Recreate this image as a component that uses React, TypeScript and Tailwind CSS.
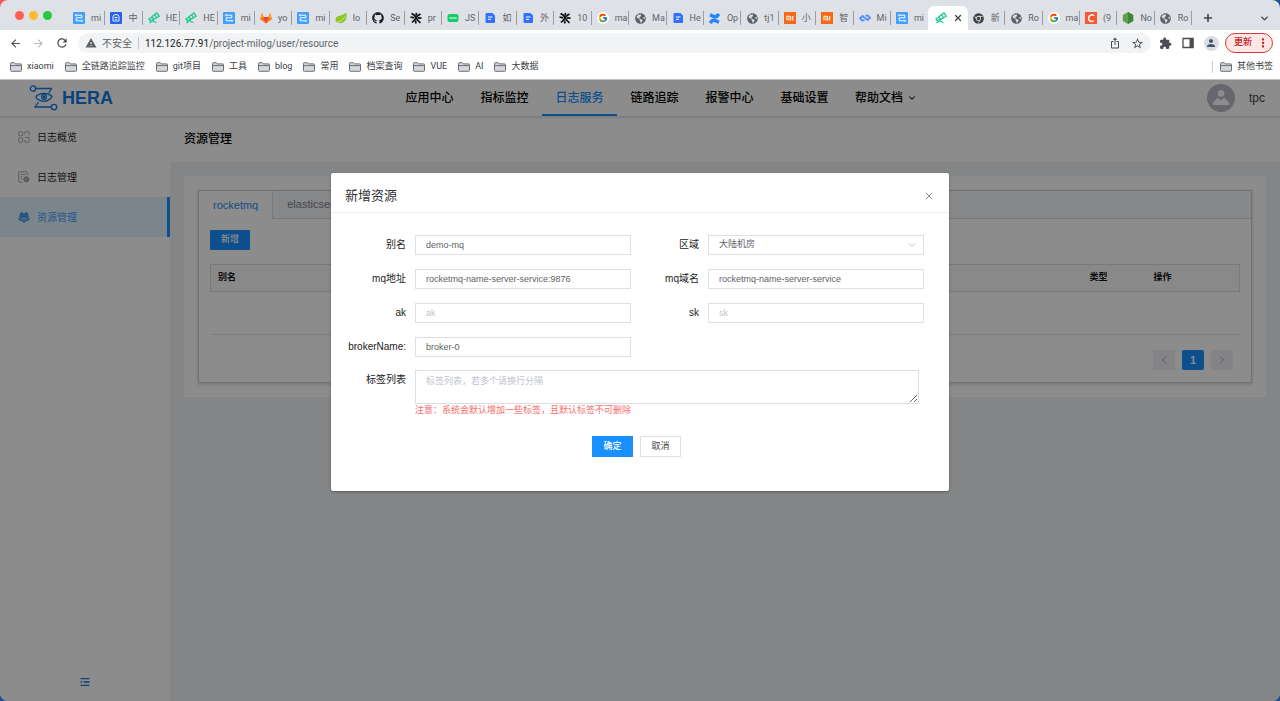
import { useState } from "react";
import type { ReactNode } from "react";
import { ChevronDown, ChevronLeft, ChevronRight, Plus, X } from "lucide-react";
import { FaChrome, FaGithub, FaGlobeAmericas } from "react-icons/fa";
import { FcGoogle } from "react-icons/fc";
import { SiConfluence } from "react-icons/si";
import {
  MdArrowBack,
  MdArrowForward,
  MdExtension,
  MdMoreVert,
  MdOutlineIosShare,
  MdPerson,
  MdRefresh,
  MdStarBorder,
  MdWarning,
} from "react-icons/md";

function MilogIcon() {
  return (
    <svg viewBox="0 0 12 12" className="size-3">
      <rect width="12" height="12" rx="1" fill="#409eff" />
      <path d="M4 3.200h4.800v2.600H3.200v3H8" fill="none" stroke="#fff" strokeWidth="1" />
      <circle cx="3" cy="3.200" r=".8" fill="#409eff" stroke="#fff" strokeWidth=".8" />
      <circle cx="9" cy="8.800" r=".8" fill="#409eff" stroke="#fff" strokeWidth=".8" />
    </svg>
  );
}

function CnIcon() {
  return (
    <svg viewBox="0 0 12 12" className="size-3">
      <rect width="12" height="12" rx="1" fill="#2563eb" />
      <path d="M3 9V4.800a3 2.300 0 0 1 6 0V9zM4.500 5.500h3M5 7.200h2" fill="none" stroke="#fff" strokeWidth=".9" />
    </svg>
  );
}

function TelescopeIcon() {
  return (
    <svg viewBox="0 0 12 12" className="size-3" fill="none" stroke="#1fc98b" strokeWidth="1.300">
      <path d="M4 4.500 9 1l2.200 3.300L5.800 7.300zM4.200 5 1 7l1.100 1.800L5.500 7M5 7.500v1.800l3.500 1.200M1.500 11l2.500-1.500M6.800 3l1.600 2.700" />
    </svg>
  );
}

function GitlabIcon() {
  return (
    <svg viewBox="0 0 12 12" className="size-3">
      <path d="M6 11.500 0 7l2-6 1.700 4h4.600L10 1l2 6z" fill="#fc6d26" />
      <path d="M6 11.500 3.700 5h4.600z" fill="#e24329" />
      <path d="M0 7l2-6 1.700 4zM12 7l-2-6-1.700 4z" fill="#fca326" />
    </svg>
  );
}

function LeafIcon() {
  return (
    <svg viewBox="0 0 12 12" className="size-3">
      <path d="M11.300.5C12.500 7 10 11 5 11.200 1.500 11.300 0 9 .5 6.800 1.200 3.200 7.500 4.200 11.300.5z" fill="#8cc820" />
      <path d="M1.500 10.300C5 10 8.500 8 10 4.500" fill="none" stroke="#dee1e6" strokeWidth=".8" />
    </svg>
  );
}

function KnotIcon() {
  return (
    <svg viewBox="0 0 12 12" className="size-3" fill="none" stroke="#111" strokeWidth="1.700">
      <path d="M1.500 1.500 4 3l4 5.500 2.500 2.500M10.500 2 8 3.500 4.500 8 2 10.500M.5 5l3.500.8M8 5.800l3.500.4M6.500.8 6 3.500M5.500 8.500l.5 3" />
    </svg>
  );
}

function JsonIcon() {
  return (
    <svg viewBox="0 0 12 12" className="size-3">
      <rect x=".5" y="2" width="11" height="8" rx="2" fill="#13ce66" />
      <path d="M2.500 6h7" stroke="#b8f3d2" strokeWidth="2" strokeDasharray="1.300 .6" />
    </svg>
  );
}

function DocIcon() {
  return (
    <svg viewBox="0 0 12 12" className="size-3">
      <path d="M2.500 1h6L11 3.500V10a1 1 0 0 1-1 1H2.500a1 1 0 0 1-1-1V2a1 1 0 0 1 1-1z" fill="#3370ff" />
      <path d="M4 5h4.500M4 7.300h3" stroke="#fff" strokeWidth="1" />
    </svg>
  );
}

function LoopIcon() {
  return (
    <svg viewBox="0 0 12 12" className="size-3" fill="none" stroke="#4d8dff" strokeWidth="1.700">
      <path d="M5.500 8.200 3.300 8.500 1 6.200 3.500 4 6 6.200M6.500 3.800 8.700 3.500 11 5.800 8.500 8 6 5.800" />
    </svg>
  );
}

function GoogleIcon() {
  return (
    <span className="flex size-3 items-center justify-center rounded-full bg-white">
      <FcGoogle size={10} />
    </span>
  );
}

function MiIcon() {
  return (
    <svg viewBox="0 0 12 12" className="size-3">
      <rect width="12" height="12" fill="#f56a14" />
      <path d="M3 8.500V4.300h2.500a1.200 1.200 0 0 1 1.200 1.200v3M4.900 5.800v2.700M8.700 4v4.500" fill="none" stroke="#fff" strokeWidth="1.100" />
    </svg>
  );
}

function CsdnIcon() {
  return (
    <svg viewBox="0 0 12 12" className="size-3">
      <rect width="12" height="12" fill="#fc5531" />
      <path d="M9 4C8.300 2.500 4.600 2.200 3.800 5 3 9 5.500 10.200 8.600 8.800" fill="none" stroke="#fff" strokeWidth="1.500" />
    </svg>
  );
}

function NodeIcon() {
  return (
    <svg viewBox="0 0 12 12" className="size-3">
      <path d="M6 0l5.200 3v6L6 12 .8 9V3z" fill="#5fa04e" />
      <path d="M6 0l5.200 3v6L6 12z" fill="#3e863d" />
    </svg>
  );
}

const globe = <FaGlobeAmericas size={11} color="#5f6368" />;

const browserTabs: { icon: ReactNode; label: string }[] = [
  { icon: <MilogIcon />, label: "mi" },
  { icon: <CnIcon />, label: "中" },
  { icon: <TelescopeIcon />, label: "HE" },
  { icon: <TelescopeIcon />, label: "HE" },
  { icon: <MilogIcon />, label: "mi" },
  { icon: <GitlabIcon />, label: "yo" },
  { icon: <MilogIcon />, label: "mi" },
  { icon: <LeafIcon />, label: "lo" },
  { icon: <FaGithub size={12} color="#1b1f23" />, label: "Se" },
  { icon: <KnotIcon />, label: "pr" },
  { icon: <JsonIcon />, label: "JS" },
  { icon: <DocIcon />, label: "如" },
  { icon: <DocIcon />, label: "外" },
  { icon: <KnotIcon />, label: "10" },
  { icon: <GoogleIcon />, label: "ma" },
  { icon: globe, label: "Ma" },
  { icon: <DocIcon />, label: "He" },
  { icon: <SiConfluence size={11} color="#2684ff" />, label: "Op" },
  { icon: globe, label: "tj1" },
  { icon: <MiIcon />, label: "小" },
  { icon: <MiIcon />, label: "智" },
  { icon: <LoopIcon />, label: "Mi" },
  { icon: <MilogIcon />, label: "mi" },
  { icon: <TelescopeIcon />, label: "" },
  { icon: <FaChrome size={11} color="#3c4043" />, label: "新" },
  { icon: globe, label: "Ro" },
  { icon: <GoogleIcon />, label: "ma" },
  { icon: <CsdnIcon />, label: "(9" },
  { icon: <NodeIcon />, label: "No" },
  { icon: globe, label: "Ro" },
];
const activeTab = 23;

const bookmarks = ["xiaomi", "全链路追踪监控", "git项目", "工具", "blog", "常用", "档案查询", "VUE", "AI", "大数据"];

function Bookmark({ name }: { name: string }) {
  return (
    <a href="#" className="flex items-center gap-[5px] whitespace-nowrap">
      <svg viewBox="0 0 12 10" className="h-2.5 w-3" fill="#d5d7da" stroke="#5f6368" strokeWidth=".9">
        <path d="M.5 1.500a.8.8 0 0 1 .8-.8h3l1 1.200h5.400a.8.8 0 0 1 .8.8v5.800a.8.8 0 0 1-.8.8H1.300a.8.8 0 0 1-.8-.8z" />
        <path d="M.5 3.600h11" fill="none" />
      </svg>
      {name}
    </a>
  );
}

function BrowserChrome() {
  return (
    <div className="font-[Roboto,'Noto_Sans_CJK_SC',sans-serif] text-[#3c4043]">
      <div className="flex h-[30px] bg-[#dee1e6]">
        <div className="flex w-[68px] shrink-0 items-center gap-[5px] pl-[15px]">
          <span className="size-[9px] rounded-full bg-[#fe5f57]" />
          <span className="size-[9px] rounded-full bg-[#febb2e]" />
          <span className="size-[9px] rounded-full bg-[#28c840]" />
        </div>
        <div className="flex min-w-0 flex-1 pt-1.5">
          {browserTabs.map((tab, i) =>
            i === activeTab ? (
              <div key={i} className="flex min-w-0 flex-1 items-center gap-1.5 rounded-t-md bg-white pl-[7px]">
                {tab.icon}
                <button aria-label="关闭标签页">
                  <X size={10} strokeWidth={3} />
                </button>
              </div>
            ) : (
              <div key={i} className="flex min-w-0 flex-1 items-center pl-[5px]">
                <span className="flex w-3 shrink-0 justify-center">{tab.icon}</span>
                <span className="ml-1.5 w-[13px] shrink-0 text-[9px] leading-4 whitespace-nowrap text-[#5f6368]">
                  {tab.label}
                </span>
                <span
                  className={`ml-auto h-3.5 w-px shrink-0 ${i === activeTab - 1 ? "bg-transparent" : "bg-[#9a9da1]"}`}
                />
              </div>
            )
          )}
        </div>
        <div className="flex w-[88px] shrink-0 items-center justify-between pt-1.5 pr-2.5 pl-2.5">
          <button aria-label="新标签页">
            <Plus size={12} strokeWidth={3} />
          </button>
          <button aria-label="搜索标签页">
            <ChevronDown size={11} strokeWidth={3} />
          </button>
        </div>
      </div>

      <div className="flex h-[26px] items-center bg-white pr-[7px] pl-[9px] text-[#4a4d51]">
        <div className="flex w-[69px] shrink-0 items-center gap-2.5">
          <button aria-label="后退"><MdArrowBack size={13} /></button>
          <button aria-label="前进"><MdArrowForward size={13} color="#b5b8bb" /></button>
          <button aria-label="刷新"><MdRefresh size={14} /></button>
        </div>
        <div className="flex h-5 flex-1 items-center rounded-full bg-[#f1f3f4] px-[7px] text-[10px]">
          <MdWarning size={12} color="#5f6368" />
          <span className="ml-[5px] text-[#5f6368]">不安全</span>
          <span className="mx-1.5 h-3 w-px bg-[#c4c7ca]" />
          <span className="text-[#5f6368]">
            <span className="text-[#202124]">112.126.77.91</span>/project-milog/user/resource
          </span>
          <span className="ml-auto flex items-center gap-2.5">
            <MdOutlineIosShare size={12} />
            <MdStarBorder size={13} />
          </span>
        </div>
        <div className="flex items-center gap-2.5 pl-2">
          <MdExtension size={13} />
          <svg viewBox="0 0 12 12" className="size-3">
            <path d="M1 1.500h10v9H1z" fill="none" stroke="#4a4d51" strokeWidth="1.300" />
            <path d="M7.500 1h4v10h-4z" fill="#4a4d51" />
          </svg>
          <span className="flex size-[15px] items-center justify-center rounded-full bg-[#dadde2]">
            <MdPerson size={12} color="#44546f" />
          </span>
          <button className="-ml-1 flex h-5 items-center gap-1 rounded-full border border-[#d93a36] bg-[#fce8e6] pr-0.5 pl-2 text-[9px] font-medium text-[#c5221f]">
            更新
            <MdMoreVert size={14} />
          </button>
        </div>
      </div>

      <div className="flex h-6 items-center gap-[11px] border-b border-[#c9c9c9] bg-white pr-[7px] pb-0.5 pl-2.5 text-[9px]">
        {bookmarks.map((name) => (
          <Bookmark key={name} name={name} />
        ))}
        <span className="ml-auto flex items-center gap-[7px]">
          <span className="h-3 w-px bg-[#c9ccd0]" />
          <Bookmark name="其他书签" />
        </span>
      </div>
    </div>
  );
}

const navItems = ["应用中心", "指标监控", "日志服务", "链路追踪", "报警中心", "基础设置"];

function Header() {
  return (
    <header className="relative z-10 flex h-9 shrink-0 items-stretch bg-white shadow-[0_1px_3px_rgba(0,21,41,0.2)]">
      <div className="flex w-[392px] shrink-0 items-center gap-1 pl-[29px] text-lg font-bold text-[#1379de]">
        <svg viewBox="0 0 29 26" className="h-[26px] w-[29px]" fill="none" stroke="currentColor" strokeWidth="1.300">
          <circle cx="4" cy="3.500" r="2.700" />
          <circle cx="25" cy="22" r="2.700" />
          <path d="M6.700 3.500H22.500L20 8M22.300 22H6l3.500-5M7 11.500C10 7.800 19 7.200 23 11.500c-1.800 3.800-6 5.200-9 4.700-4-.5-7-2.700-7-4.700z" />
          <circle cx="15" cy="12" r="2.300" />
          <circle cx="15" cy="12" r=".6" fill="currentColor" />
        </svg>
        HERA
      </div>
      <nav className="flex text-xs font-medium text-black">
        {navItems.map((item) => (
          <a
            key={item}
            href="#"
            className={`flex w-[75px] items-center justify-center border-y-2 border-t-transparent ${
              item === "日志服务" ? "border-b-[#1890ff] text-[#1890ff]" : "border-b-transparent"
            }`}
          >
            {item}
          </a>
        ))}
        <a href="#" className="flex items-center gap-1 px-[13px]">
          帮助文档
          <ChevronDown size={10} strokeWidth={2.500} />
        </a>
      </nav>
      <div className="ml-auto flex items-center gap-3.5 pr-[15px] text-xs text-[#444]">
        <svg viewBox="0 0 28 28" className="size-7">
          <circle cx="14" cy="14" r="14" fill="#babcc6" />
          <circle cx="14" cy="9.500" r="3.300" fill="#fff" />
          <path d="M6 21v-2.500l5-5 3 3 3-3 5 5V21z" fill="#fff" />
        </svg>
        tpc
      </div>
    </header>
  );
}

function OverviewIcon() {
  return (
    <svg viewBox="0 0 12 12" className="size-3" fill="none" stroke="#a0a0a0" strokeWidth=".9">
      <rect x=".7" y=".7" width="4" height="4" rx="1" />
      <rect x=".7" y="6.700" width="4" height="4.600" rx="1" />
      <path d="M6.700 3V1.700a1 1 0 0 1 1-1h2.600a1 1 0 0 1 1 1V4M7 6.500h3.300a1 1 0 0 1 1 1v2.800a1 1 0 0 1-1 1H7.700a1 1 0 0 1-1-1V9" />
    </svg>
  );
}

function LogIcon() {
  return (
    <svg viewBox="0 0 12 12" className="size-3" fill="none" stroke="#a0a0a0" strokeWidth=".9">
      <path d="M4.500 11.300h-3a.8.8 0 0 1-.8-.8v-9a.8.8 0 0 1 .8-.8h7a.8.8 0 0 1 .8.8V4M2.500 3.300h5M2.500 5.800h2M2.500 8h1.500" />
      <circle cx="8.300" cy="8.300" r="2.600" fill="#b5b5b5" />
      <circle cx="8.300" cy="8.300" r=".8" fill="#fff" />
    </svg>
  );
}

function ResourceIcon() {
  return (
    <svg viewBox="0 0 12 12" className="size-3" fill="#409eff" stroke="#2b84e6" strokeWidth=".7">
      <path d="M1.500 6.500 2.300 3l1-1.500h1.200L5.600 3v3.500zM6.400 6.500V3l1.100-1.500h1.200l1 1.500.8 3.500z" />
      <path d="M.5 7c0 2 3 2 5.500 4 2.500-2 5.500-2 5.500-4M2.500 7.500 6 9l3.500-1.500" fill="none" strokeWidth="1.100" />
    </svg>
  );
}

const menu = [
  { icon: <OverviewIcon />, label: "日志概览" },
  { icon: <LogIcon />, label: "日志管理" },
  { icon: <ResourceIcon />, label: "资源管理", active: true },
];

function Sidebar() {
  return (
    <aside className="flex w-[170px] shrink-0 flex-col bg-white pt-px">
      {menu.map((item) => (
        <a
          key={item.label}
          href="#"
          className={`flex h-10 items-center gap-[7px] border-r-3 pl-[18px] text-[10px] ${
            item.active ? "border-[#1890ff] bg-[#e0f4ff] text-[#409eff]" : "border-transparent text-[#222]"
          }`}
        >
          {item.icon}
          {item.label}
        </a>
      ))}
      <button aria-label="收起菜单" className="mx-auto mt-auto mb-3.5">
        <svg viewBox="0 0 10 10" className="size-2.5" stroke="#1379de" strokeWidth="1.300">
          <path d="M.5 1.700h9M3.500 5h6M.5 8.300h9M.5 5h1.700" />
        </svg>
      </button>
    </aside>
  );
}

function ResourcePage() {
  return (
    <main className="min-w-0 flex-1 bg-[#f0f2f5]">
      <h1 className="flex h-[46px] items-center bg-white px-3.5 text-xs font-medium text-black">资源管理</h1>
      <div className="m-3.5 bg-white p-3.5">
        <div className="border border-[#cdd0d6] shadow-[0_1px_3px_rgba(0,0,0,0.2)]">
          <div className="flex h-7 border-b border-[#d8dbe2] bg-[#f5f7fa] text-[11px]">
            <button className="-mb-px border-r border-[#d8dbe2] bg-white px-3.5 text-[#1f8bf5]">rocketmq</button>
            <button className="px-3.5 text-[#808388]">elasticsearch</button>
          </div>
          <div className="px-[11px] pt-[11px] pb-3">
            <button className="block h-5 w-10 bg-[#1890ff] text-[9px] font-medium text-white">新增</button>
            <table className="mt-3.5 w-full border-b border-[#e4e6ea] text-left text-[9px]">
              <thead>
                <tr className="h-[27px] border border-[#dcdfe6] bg-[#fafafa] text-[#111]">
                  <th className="px-[7px] font-bold">别名</th>
                  <th className="w-16 px-[7px] font-bold">类型</th>
                  <th className="w-[93px] px-[7px] font-bold">操作</th>
                </tr>
              </thead>
              <tbody>
                <tr className="h-[43px]">
                  <td colSpan={3} />
                </tr>
              </tbody>
            </table>
            <div className="mt-[15px] flex justify-end gap-[7px] pr-[7px] text-[10px]">
              <button aria-label="上一页" disabled className="flex h-5 w-[22px] items-center justify-center bg-[#f0f1f4] text-[#a8abb2]">
                <ChevronLeft size={12} />
              </button>
              <button className="h-5 w-[22px] rounded-xs bg-[#1890ff] font-bold text-white">1</button>
              <button aria-label="下一页" disabled className="flex h-5 w-[22px] items-center justify-center bg-[#f0f1f4] text-[#a8abb2]">
                <ChevronRight size={12} />
              </button>
            </div>
          </div>
        </div>
      </div>
    </main>
  );
}

const fieldClass =
  "block h-5 w-full min-w-0 border border-[#dcdfe6] bg-white px-2.5 text-[9px] text-[#606266] outline-none placeholder:text-[#c0c4cc]";

function Field({ id, label, children }: { id: string; label: string; children: ReactNode }) {
  return (
    <div className="flex gap-[9px]">
      <label htmlFor={id} className="w-[61px] shrink-0 text-right text-[10px] leading-5 whitespace-nowrap text-[#222]">
        {label}
      </label>
      <div className="relative min-w-0 flex-1">{children}</div>
    </div>
  );
}

function ResourceDialog() {
  const [form, setForm] = useState({
    alias: "demo-mq",
    region: "大陆机房",
    address: "rocketmq-name-server-service:9876",
    domain: "rocketmq-name-server-service",
    ak: "",
    sk: "",
    brokerName: "broker-0",
    tags: "",
  });

  const input = (name: keyof typeof form, placeholder = "") => (
    <input
      id={name}
      type="text"
      className={fieldClass}
      placeholder={placeholder}
      value={form[name]}
      onChange={(e) => setForm({ ...form, [name]: e.target.value })}
    />
  );

  return (
    <div role="dialog" aria-labelledby="dialog-title" className="w-[618px] max-w-full rounded-xs bg-white shadow-[0_1px_3px_rgba(0,0,0,0.3)]">
      <div className="flex h-10 items-center justify-between border-b border-[#f0f0f0] px-3.5 pt-1.5">
        <h2 id="dialog-title" className="text-[13px] text-[#303133]">新增资源</h2>
        <button aria-label="关闭" className="text-[#909399]">
          <X size={12} strokeWidth={2} />
        </button>
      </div>
      <form className="pt-[22px] pr-[25px] pb-[34px] pl-3.5" onSubmit={(e) => e.preventDefault()}>
        <div className="grid grid-cols-2 gap-x-[7px] gap-y-3.5">
          <Field id="alias" label="别名">{input("alias")}</Field>
          <Field id="region" label="区域">
            <select
              id="region"
              className={`${fieldClass} appearance-none`}
              value={form.region}
              onChange={(e) => setForm({ ...form, region: e.target.value })}
            >
              <option>大陆机房</option>
            </select>
            <ChevronDown size={12} strokeWidth={1.500} className="pointer-events-none absolute top-1 right-1.5 text-[#b0b4bc]" />
          </Field>
          <Field id="address" label="mq地址">{input("address")}</Field>
          <Field id="domain" label="mq域名">{input("domain")}</Field>
          <Field id="ak" label="ak">{input("ak", "ak")}</Field>
          <Field id="sk" label="sk">{input("sk", "sk")}</Field>
          <Field id="brokerName" label="brokerName:">{input("brokerName")}</Field>
        </div>
        <div className="mt-[13px] pr-[5px]">
          <Field id="tags" label="标签列表">
            <textarea
              id="tags"
              className="block h-[34px] w-full resize border border-[#dcdfe6] px-2.5 py-1 text-[9px] leading-3 text-[#606266] outline-none placeholder:text-[#c0c4cc]"
              placeholder="标签列表，若多个请换行分隔"
              value={form.tags}
              onChange={(e) => setForm({ ...form, tags: e.target.value })}
            />
            <p className="text-[9px] leading-3 text-[#f56c6c]">注意：系统会默认增加一些标签，且默认标签不可删除</p>
          </Field>
        </div>
        <div className="mt-5 flex justify-center gap-[7px] pl-1 text-[9px]">
          <button type="submit" className="h-[21px] w-[41px] bg-[#1890ff] font-medium text-white">确定</button>
          <button type="button" className="h-[21px] w-[41px] border border-[#dcdfe6] text-[#444]">取消</button>
        </div>
      </form>
    </div>
  );
}

export default function App() {
  return (
    <div className="min-h-screen bg-[radial-gradient(circle_at_0_0,#fa5252_20px,#1b4f94_21px)]">
      <div className="flex min-h-screen flex-col overflow-hidden rounded-lg">
        <BrowserChrome />
        <div className="relative flex flex-1 flex-col font-['Liberation_Sans','Noto_Sans_CJK_SC',sans-serif]">
          <Header />
          <div className="flex flex-1">
            <Sidebar />
            <ResourcePage />
          </div>
          <div className="absolute inset-0 z-20 flex items-start justify-center bg-black/45 pt-[93px]">
            <ResourceDialog />
          </div>
        </div>
      </div>
    </div>
  );
}
